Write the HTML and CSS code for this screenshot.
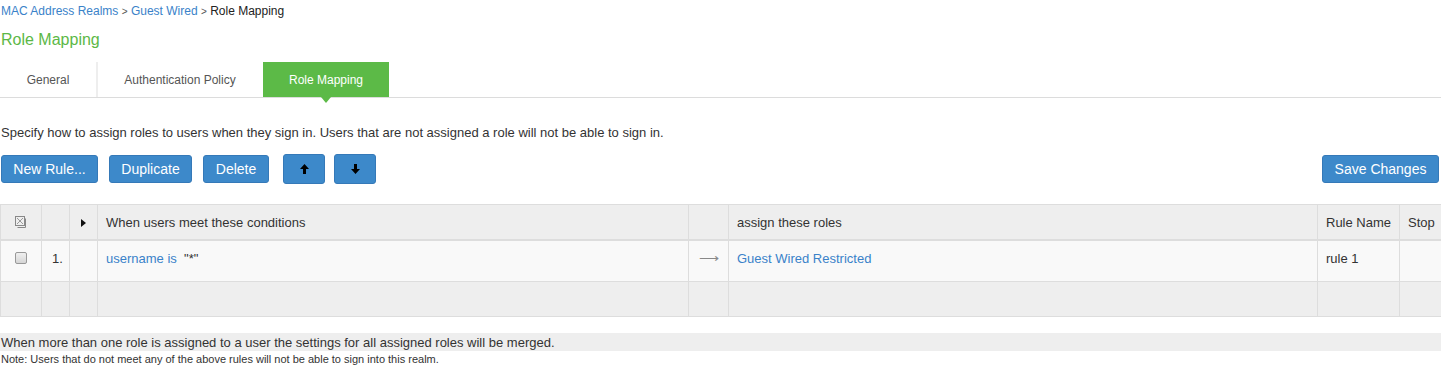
FILE: index.html
```html
<!DOCTYPE html>
<html lang="en">
<head>
  <meta charset="UTF-8">
  <title>Role Mapping</title>
  <link rel="stylesheet" href="styles.css">
</head>
<body>
  <div class="breadcrumb">
    <a href="#">MAC Address Realms</a> <span class="sep">&gt;</span> <a href="#">Guest Wired</a> <span class="sep">&gt;</span> <span class="current">Role Mapping</span>
  </div>

  <h1 class="page-title">Role Mapping</h1>

  <!-- Tabs -->
  <ul class="tabs">
    <li class="tab tab-general">General</li>
    <li class="tab tab-auth">Authentication Policy</li>
    <li class="tab tab-active">Role Mapping</li>
  </ul>

  <p class="intro">Specify how to assign roles to users when they sign in. Users that are not assigned a role will not be able to sign in.</p>

  <!-- Toolbar -->
  <div class="toolbar">
    <div class="toolbar-left">
      <button class="btn btn-new">New Rule...</button>
      <button class="btn btn-dup">Duplicate</button>
      <button class="btn btn-del">Delete</button>
      <button class="btn btn-arrow btn-up">
        <svg width="9" height="10" viewBox="0 0 9 10"><polygon points="4.5,0 9,5 6,5 6,10 3,10 3,5 0,5" fill="#000"/></svg>
      </button>
      <button class="btn btn-arrow">
        <svg width="9" height="10" viewBox="0 0 9 10"><polygon points="3,0 6,0 6,5 9,5 4.5,10 0,5 3,5" fill="#000"/></svg>
      </button>
    </div>
    <button class="btn btn-save">Save Changes</button>
  </div>

  <!-- Rules table -->
  <table class="rules">
    <colgroup>
      <col class="c-check">
      <col class="c-num">
      <col class="c-expand">
      <col class="c-cond">
      <col class="c-to">
      <col class="c-roles">
      <col class="c-name">
      <col class="c-stop">
    </colgroup>
    <thead>
      <tr>
        <th class="center">
          <svg class="select-all" width="12" height="13" viewBox="0 0 12 13">
            <rect x="0.5" y="0.5" width="9" height="9" fill="none" stroke="#888"/>
            <path d="M2 2 L8 8 M8 2 L2 8" stroke="#999" stroke-width="1"/>
            <path d="M10.5 2.5 V11.5 H2.5" fill="none" stroke="#888"/>
          </svg>
        </th>
        <th></th>
        <th class="center"><span class="caret"></span></th>
        <th>When users meet these conditions</th>
        <th></th>
        <th>assign these roles</th>
        <th>Rule Name</th>
        <th>Stop</th>
      </tr>
    </thead>
    <tbody>
      <tr class="rule-row">
        <td class="center"><span class="checkbox"></span></td>
        <td class="num">1.</td>
        <td></td>
        <td><a href="#">username is</a>&nbsp; "*"</td>
        <td class="to">&#10230;</td>
        <td><a href="#">Guest Wired Restricted</a></td>
        <td>rule 1</td>
        <td></td>
      </tr>
      <tr class="empty-row">
        <td></td><td></td><td></td><td></td><td></td><td></td><td></td><td></td>
      </tr>
    </tbody>
  </table>

  <div class="merge-note">When more than one role is assigned to a user the settings for all assigned roles will be merged.</div>
  <div class="small-note">Note: Users that do not meet any of the above rules will not be able to sign into this realm.</div>
</body>
</html>
```

FILE: styles.css
```css
/* General Layout */
body {
  margin: 0;
  padding: 0;
  font-family: "Liberation Sans", Arial, sans-serif;
  font-size: 12px;
  color: #333;
  background: #fff;
}

a {
  color: #3a82c9;
  text-decoration: none;
}

/* Breadcrumb */
.breadcrumb {
  height: 22px;
  line-height: 22px;
  padding-left: 1px;
  font-size: 12px;
}

.breadcrumb .sep {
  color: #555;
  font-size: 10px;
}

.breadcrumb .current {
  color: #222;
}

.page-title {
  margin: 8px 0 0 1px;
  font-size: 16px;
  font-weight: normal;
  line-height: 20px;
  color: #5cb846;
}

/* Tabs */
.tabs {
  display: flex;
  list-style: none;
  margin: 12px 0 0 0;
  padding: 0;
  height: 35px;
  border-bottom: 1px solid #dcdcdc;
}

.tab {
  height: 35px;
  line-height: 36px;
  text-align: center;
  color: #555;
  font-size: 12px;
}

.tab-general {
  width: 96px;
  border-right: 2px solid #eee;
}

.tab-auth {
  width: 164px;
  margin-right: 1px;
}

.tab-active {
  position: relative;
  width: 126px;
  background: #5cba47;
  color: #fff;
}

.tab-active::after {
  content: "";
  position: absolute;
  left: 58px;
  bottom: -6px;
  border-left: 5px solid transparent;
  border-right: 5px solid transparent;
  border-top: 6px solid #5cba47;
}

.intro {
  margin: 26px 0 0 1px;
  line-height: 17px;
  font-size: 13px;
}

/* Toolbar */
.toolbar {
  display: flex;
  justify-content: space-between;
  align-items: center;
  margin-top: 13px;
  padding: 0 2px 0 1px;
  height: 30px;
}

.toolbar-left {
  display: flex;
  align-items: center;
  gap: 11px;
}

.btn {
  height: 28px;
  padding: 0;
  border: 1px solid #3579b8;
  border-radius: 3px;
  background: #3d89ca;
  color: #fff;
  font-family: "Liberation Sans", Arial, sans-serif;
  font-size: 14px;
  white-space: nowrap;
  cursor: pointer;
}

.btn-new { width: 97px; }
.btn-dup { width: 83px; }
.btn-del { width: 66px; }

.btn-arrow {
  width: 42px;
  height: 30px;
  display: flex;
  align-items: center;
  justify-content: center;
}

.btn-up {
  margin-left: 3px;
}

.btn-arrow + .btn-arrow {
  margin-left: -2px;
}

.btn-save {
  width: 117px;
}

/* Rules table */
.rules {
  margin-top: 20px;
  width: 100%;
  border-collapse: collapse;
  table-layout: fixed;
  font-size: 13px;
}

.c-check { width: 41px; }
.c-num { width: 28px; }
.c-expand { width: 28px; }
.c-cond { width: 591px; }
.c-to { width: 40px; }
.c-roles { width: 589px; }
.c-name { width: 82px; }
.c-stop { width: 42px; }

.rules th,
.rules td {
  border: 1px solid #ddd;
  padding: 0 8px;
  text-align: left;
  white-space: nowrap;
  overflow: hidden;
}

.rules th {
  height: 34px;
  background: #eee;
  font-weight: normal;
  color: #333;
  border-bottom: 2px solid #ddd;
}

.rules .center {
  text-align: center;
  padding: 0;
}

.select-all {
  display: inline-block;
  vertical-align: middle;
  margin-top: -2px;
}

.caret {
  display: inline-block;
  width: 0;
  height: 0;
  border-top: 4px solid transparent;
  border-bottom: 4px solid transparent;
  border-left: 5px solid #111;
  vertical-align: middle;
}

.rule-row td {
  height: 32px;
  background: #f9f9f9;
  padding-bottom: 6px;
}

.rule-row .num {
  padding-left: 10px;
  color: #333;
}

.rule-row .to {
  color: #888;
  text-align: center;
  padding: 0 0 6px 0;
  font-size: 14px;
}

.rule-row .center {
  padding-bottom: 8px;
}

.checkbox {
  display: inline-block;
  width: 10px;
  height: 10px;
  border: 1px solid #999;
  border-radius: 2px;
  background: linear-gradient(#f0f0f0, #d6d6d6);
  vertical-align: middle;
  margin-left: -1px;
}

.empty-row td {
  height: 34px;
  background: #eee;
}

/* Notes */
.merge-note {
  margin-top: 16px;
  padding-left: 1px;
  height: 18px;
  line-height: 19px;
  background: #eee;
  font-size: 13px;
  color: #333;
}

.small-note {
  margin-top: 1px;
  padding-left: 1px;
  line-height: 15px;
  font-size: 11px;
  color: #333;
}
```
